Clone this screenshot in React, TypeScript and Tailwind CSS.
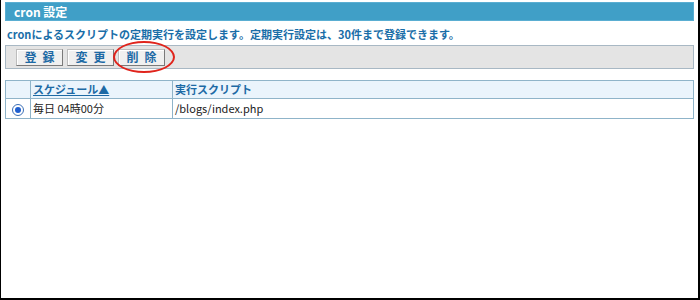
import React from "react";

const jp = "font-['Noto_Sans_CJK_JP','Noto_Sans',sans-serif]";

function ToolButton({ label }: { label: string }) {
  return (
    <button
      className={`h-[17px] w-[47px] border border-[#7a7a7a] border-t-[#bdbdbd] border-l-[#bdbdbd] bg-[#f0f0f0] text-[12px] leading-none font-bold text-[#1d6aa5] tracking-[6px] pl-[6px] shadow-[inset_1px_1px_0_#fff] ${jp}`}
    >
      {label}
    </button>
  );
}

export default function App() {
  return (
    <div className="w-[700px] h-[300px] bg-white border-l border-r-2 border-b-2 border-black pt-[2px] px-[4px]">
      {/* title bar */}
      <div className={`h-[19px] bg-[#409fc7] border border-[#5aaed2] px-[8px] flex items-center text-white text-[12px] font-bold ${jp}`}>
        cron 設定
      </div>

      <p className={`mt-[5px] pl-[2px] text-[11px] font-bold text-[#1a6ea8] leading-[16px] ${jp}`}>
        cronによるスクリプトの定期実行を設定します。定期実行設定は、30件まで登録できます。
      </p>

      {/* button bar */}
      <div className="relative mt-[3px] h-[24px] bg-[#e4e4e4] border border-[#a8b8c4] flex items-center gap-[4px] pl-[10px]">
        <ToolButton label="登録" />
        <ToolButton label="変更" />
        <ToolButton label="削除" />
        <div className="absolute left-[107px] top-[-5px] w-[62px] h-[32px] rounded-[50%] border-2 border-[#e0241c]" />
      </div>

      {/* schedule table */}
      <table className={`mt-[11px] w-full border-collapse text-[11px] ${jp}`}>
        <thead>
          <tr className="h-[18px] bg-[#eaf4fc]">
            <th className="w-[25px] border border-[#8fb4c9]" />
            <th className="w-[142px] border border-[#8fb4c9] text-left px-[2px] font-bold">
              <span className="text-[#1d6aa5] underline">スケジュール▲</span>
            </th>
            <th className="border border-[#8fb4c9] text-left px-[2px] font-bold text-[#1d6aa5]">
              実行スクリプト
            </th>
          </tr>
        </thead>
        <tbody>
          <tr className="h-[20px] bg-white">
            <td className="border border-[#8fb4c9] text-center">
              <span className="inline-flex items-center justify-center w-[12px] h-[12px] rounded-full border border-[#3b6fb6] bg-white align-middle">
                <span className="w-[6px] h-[6px] rounded-full bg-[#1f5fcf]" />
              </span>
            </td>
            <td className="border border-[#8fb4c9] px-[2px] text-[#222]">毎日 04時00分</td>
            <td className="border border-[#8fb4c9] px-[2px] text-[#222]">/blogs/index.php</td>
          </tr>
        </tbody>
      </table>
    </div>
  );
}
